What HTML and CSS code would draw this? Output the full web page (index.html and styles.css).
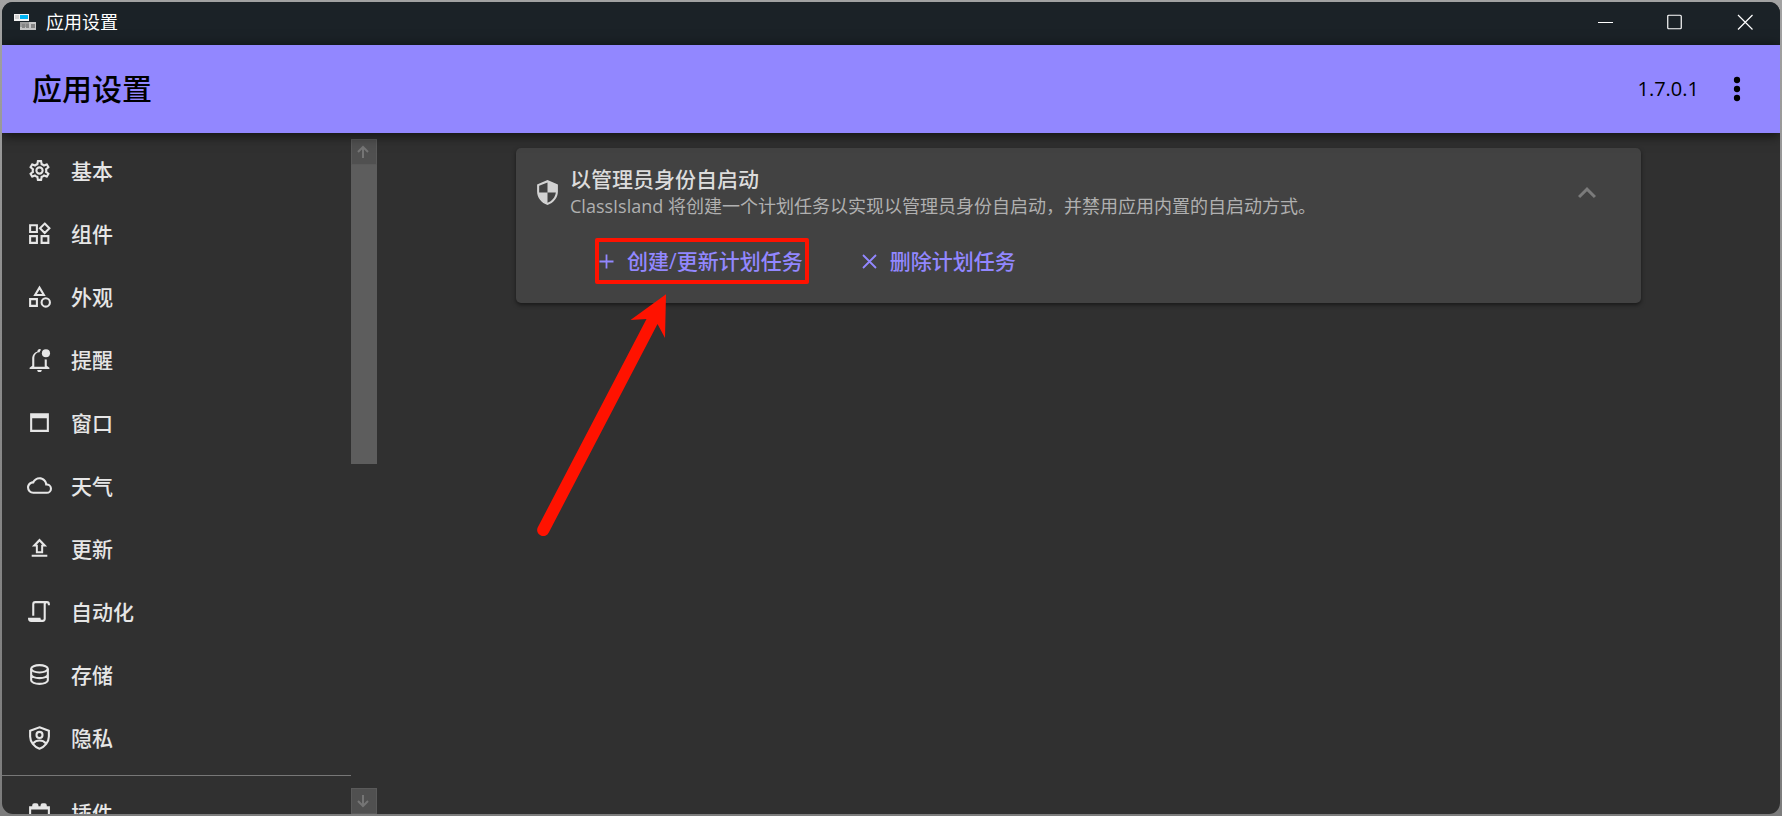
FILE: index.html
```html
<!DOCTYPE html>
<html lang="zh-CN">
<head>
<meta charset="utf-8">
<title>应用设置</title>
<link rel="stylesheet" href="styles.css">
</head>
<body>
<div class="window">
  <div class="titlebar">
    <svg class="app-icon" viewBox="0 0 22 16" aria-hidden="true">
      <rect width="15" height="7" fill="#f3f3f3"/><rect x="1" y="1" width="4" height="4" fill="#d0d0d0"/><rect x="6" y="1" width="8" height="4" fill="#00b4f5"/>
      <rect x="6" y="8" width="16" height="8" fill="#9b9b9b"/><path d="M15 8h7v8h-7z" fill="#c8c8c8"/><path d="M6 13h16v3H6z" fill="#c4c4c4"/><path d="M8 10h3v4H8zM12 10h3v4h-3zM17 10h4v4h-4z" fill="#858585"/>
    </svg>
    <span class="window-name">应用设置</span>
    <div class="window-controls">
      <button aria-label="最小化"><svg viewBox="0 0 16 16"><path d="M1 8.500H16"/></svg></button>
      <button aria-label="最大化"><svg viewBox="0 0 16 16"><rect x=".75" y="1.250" width="13.500" height="13.500" rx="1"/></svg></button>
      <button aria-label="关闭"><svg viewBox="0 0 16 16"><path d="M1 1 15.500 15.500M15.500 1 1 15.500"/></svg></button>
    </div>
  </div>
  <header class="appbar">
    <h1>应用设置</h1>
    <span class="version">1.7.0.1</span>
    <button class="more" aria-label="更多"><svg viewBox="0 0 24 24"><circle cx="12" cy="6" r="2.100"/><circle cx="12" cy="12" r="2.100"/><circle cx="12" cy="18" r="2.100"/></svg></button>
  </header>
  <div class="content">
    <nav class="sidebar">
      <div class="nav-list">
        <a href="#basic"><svg class="icon" viewBox="0 0 24 24"><path d="M12,8A4,4 0 0,1 16,12A4,4 0 0,1 12,16A4,4 0 0,1 8,12A4,4 0 0,1 12,8M12,10A2,2 0 0,0 10,12A2,2 0 0,0 12,14A2,2 0 0,0 14,12A2,2 0 0,0 12,10M10,22C9.75,22 9.54,21.82 9.5,21.58L9.13,18.93C8.5,18.68 7.96,18.34 7.44,17.94L4.95,18.95C4.73,19.03 4.46,18.95 4.34,18.73L2.34,15.27C2.21,15.05 2.27,14.78 2.46,14.63L4.57,12.97L4.5,12L4.57,11L2.46,9.37C2.27,9.22 2.21,8.95 2.34,8.73L4.34,5.27C4.46,5.05 4.73,4.96 4.95,5.05L7.44,6.05C7.96,5.66 8.5,5.32 9.13,5.07L9.5,2.42C9.54,2.18 9.75,2 10,2H14C14.25,2 14.46,2.18 14.5,2.42L14.87,5.07C15.5,5.32 16.04,5.66 16.56,6.05L19.05,5.05C19.27,4.96 19.54,5.05 19.66,5.27L21.66,8.73C21.79,8.95 21.73,9.22 21.54,9.37L19.43,11L19.5,12L19.43,13L21.54,14.63C21.73,14.78 21.79,15.05 21.66,15.27L19.66,18.73C19.54,18.95 19.27,19.04 19.05,18.95L16.56,17.95C16.04,18.34 15.5,18.68 14.87,18.93L14.5,21.58C14.46,21.82 14.25,22 14,22H10M11.25,4L10.88,6.61C9.68,6.86 8.62,7.5 7.85,8.39L5.44,7.35L4.69,8.65L6.8,10.2C6.4,11.37 6.4,12.64 6.8,13.8L4.68,15.36L5.43,16.66L7.86,15.62C8.63,16.5 9.68,17.14 10.87,17.38L11.24,20H12.76L13.13,17.39C14.32,17.14 15.37,16.5 16.14,15.62L18.57,16.66L19.32,15.36L17.2,13.81C17.6,12.64 17.6,11.37 17.2,10.2L19.31,8.65L18.56,7.35L16.15,8.39C15.38,7.5 14.32,6.86 13.12,6.62L12.75,4H11.25Z"/></svg>基本</a>
        <a href="#components"><svg class="icon line" viewBox="0 0 24 24"><path d="M3 4h6.500v6.500H3zM3 14.500h6.500V21H3zM14 14.500h6.500V21H14zM17 2.500 21.500 7 17 11.500 12.500 7z"/></svg>组件</a>
        <a href="#appearance"><svg class="icon line" viewBox="0 0 24 24"><path d="M12 3.500 16.200 10.500H7.800zM3 14.500h6.500V21H3z"/><circle cx="18" cy="17.700" r="4"/></svg>外观</a>
        <a href="#notify"><svg class="icon" viewBox="0 0 24 24"><path d="M2.500 21v-1L5 18v-7c0-3.100 2-5.800 5-6.700V4a2 2 0 0 1 3.500-1.300c-.8.700-1.200 1.600-1.400 2.300A5 5 0 0 0 7 10v9h10v-7.300c.6.200 1.300.3 2 .3v6l2.500 2v1zm7.300 1h4.400a2.200 2.200 0 0 1-4.400 0z"/><circle cx="18.200" cy="6" r="3.900"/></svg>提醒</a>
        <a href="#window"><svg class="icon" viewBox="0 0 24 24"><path d="M3 3h18v18H3zm2 5v11h14V8z" fill-rule="evenodd"/></svg>窗口</a>
        <a href="#weather"><svg class="icon" viewBox="0 0 24 24"><path d="M19,18H6A4,4 0 0,1 2,14A4,4 0 0,1 6,10H6.710C7.370,7.690 9.500,6 12,6A5.500,5.500 0 0,1 17.500,11.500V12H19A3,3 0 0,1 22,15A3,3 0 0,1 19,18M19.350,10.030C18.670,6.590 15.640,4 12,4C9.110,4 6.600,5.640 5.350,8.030C2.340,8.360 0,10.900 0,14A6,6 0 0,0 6,20H19A5,5 0 0,0 24,15C24,12.360 21.950,10.220 19.350,10.030Z"/></svg>天气</a>
        <a href="#update"><svg class="icon" viewBox="0 0 24 24"><path d="M4.500 18h15v2h-15zM12 2.500 19.300 10H15.500v6.500h-7V10H4.700zm0 2.900L9.200 8.300h1.200v6.300h3.200V8.300h1.200z" fill-rule="evenodd"/></svg>更新</a>
        <a href="#automation"><svg class="icon" viewBox="0 0 24 24"><path d="M15,20A1,1 0 0,0 16,19V4H8A1,1 0 0,0 7,5V16H5V5A3,3 0 0,1 8,2H19A3,3 0 0,1 22,5V6H20V5A1,1 0 0,0 19,4A1,1 0 0,0 18,5V19A3,3 0 0,1 15,22H4A3,3 0 0,1 1,19V18H13V19A1,1 0 0,0 14,20Z"/></svg>自动化</a>
        <a href="#storage"><svg class="icon line" viewBox="0 0 24 24"><ellipse cx="12" cy="6.500" rx="8" ry="3.500"/><path d="M4 6.500v11C4 19.500 7.600 21 12 21s8-1.500 8-3.500v-11M4 12c0 2 3.600 3.500 8 3.500s8-1.500 8-3.500"/></svg>存储</a>
        <a href="#privacy"><svg class="icon line" viewBox="0 0 24 24"><path d="M12 2.200 21 5.500V11c0 5-3.800 10-9 11.700C6.800 21 3 16 3 11V5.500zM6 17.500c1.500-1.800 3.600-2.700 6-2.700s4.500.9 6 2.700"/><circle cx="12" cy="9.500" r="2.900"/></svg>隐私</a>
        <hr>
        <a href="#plugins"><svg class="icon" viewBox="0 0 24 24"><path d="M19 6V5a2 2 0 0 0-2-2h-2a2 2 0 0 0-2 2v1h-2V5a2 2 0 0 0-2-2H7a2 2 0 0 0-2 2v1H2v14h20V6zm1 12H4V9h16z" fill-rule="evenodd"/></svg>插件</a>
      </div>
      <div class="scrollbar">
        <button aria-label="向上滚动"><svg viewBox="0 0 14 14"><path d="M6 13V2M1 7l5-5 5 5"/></svg></button>
        <div class="track"><div class="thumb"></div></div>
        <button aria-label="向下滚动"><svg viewBox="0 0 14 14"><path d="M6 1v11M1 7l5 5 5-5"/></svg></button>
      </div>
    </nav>
    <main class="page">
      <section class="card">
        <div class="card-head">
          <svg class="icon" viewBox="0 0 24 24"><path d="M12 0 2 4.200V11c0 6 4.200 11 10 13 5.800-2 10-7 10-13V4.200zM12 2.500V12h8c-.6 4.500-3.600 8.400-8 9.800V12H4V5.500z" fill-rule="evenodd"/></svg>
          <div class="card-text">
            <h2>以管理员身份自启动</h2>
            <p>ClassIsland 将创建一个计划任务以实现以管理员身份自启动，并禁用应用内置的自启动方式。</p>
          </div>
          <button class="collapse" aria-label="收起"><svg viewBox="0 0 24 24"><path d="M7.410,15.410 12,10.830 16.590,15.410 18,14 12,8 6,14Z"/></svg></button>
        </div>
        <div class="actions">
          <div class="marked">
            <button class="action"><svg class="glyph" viewBox="0 0 25 25"><path d="M12.500 5.500v14M5.500 12.500h14"/></svg>创建/更新计划任务</button>
            <div class="highlight"></div>
            <svg class="arrow" viewBox="0 0 130 246" aria-hidden="true"><path d="M129 1.300 93.500 27l16 -1L0.700 234.500A6 6 0 0 0 11.800 239.500L120.500 31l7.500 14z"/></svg>
          </div>
          <button class="action"><svg class="glyph" viewBox="0 0 25 25"><path d="m6 6 13 13M19 6 6 19"/></svg>删除计划任务</button>
        </div>
      </section>
    </main>
  </div>
</div>
</body>
</html>
```

FILE: styles.css
```css
* {
  box-sizing: border-box;
}

body {
  margin: 0;
  height: 100vh;
  padding: 2px;
  background: linear-gradient(#a2a2a2, #8c8c8c 40%, #7c7c7c);
  font-family: "Open Sans", "Noto Sans CJK SC", sans-serif;
  color: #e6e6e6;
  overflow: hidden;
}

h1, h2, p {
  margin: 0;
}

button {
  border: 0;
  padding: 0;
  background: none;
  color: inherit;
  font: inherit;
}

.window {
  display: flex;
  flex-direction: column;
  height: 100%;
  overflow: hidden;
  border-radius: 11px;
  background: #303030;
}

.titlebar {
  display: flex;
  align-items: center;
  flex: none;
  height: 43px;
  padding: 0 0 3px 12px;
  background: #1b2227;
  color: #fff;
}

.app-icon {
  width: 22px;
  height: 16px;
}

.window-name {
  margin-left: 10px;
  font-size: 18px;
  font-weight: 400;
  line-height: 24px;
}

.window-controls {
  display: flex;
  height: 100%;
  margin-left: auto;
}

.window-controls button {
  display: grid;
  place-items: center;
  width: 70px;
}

.window-controls svg {
  width: 16px;
  height: 16px;
  fill: none;
  stroke: #fff;
  stroke-width: 1.2;
}

.appbar {
  display: flex;
  align-items: center;
  flex: none;
  height: 88px;
  padding: 0 25px 0 30px;
  position: relative;
  z-index: 1;
  background: #9287ff;
  box-shadow: 0 2px 12px rgba(0, 0, 0, 0.7);
  color: #000;
}

.appbar h1 {
  font-size: 30px;
  font-weight: 500;
  line-height: 44px;
}

.version {
  margin-left: auto;
  margin-right: 20px;
  font-size: 20px;
  line-height: 28px;
}

.more,
.more svg {
  display: block;
  width: 36px;
  height: 36px;
}

.content {
  display: flex;
  flex: 1;
  min-height: 0;
}

.sidebar {
  display: flex;
  flex: none;
  width: 375px;
  padding-top: 6px;
}

.nav-list {
  flex: 1;
  overflow: hidden;
}

.nav-list a {
  display: flex;
  align-items: center;
  gap: 19px;
  height: 63px;
  padding-left: 25px;
  color: inherit;
  font-size: 21px;
  font-weight: 500;
  line-height: 28px;
  text-decoration: none;
}

.nav-list hr {
  height: 1px;
  margin: 6px 0 5px;
  border: 0;
  background: #777;
}

.icon {
  display: block;
  flex: none;
  width: 25px;
  height: 25px;
  fill: currentColor;
}

.line {
  fill: none;
  stroke: currentColor;
  stroke-width: 2;
}

.scrollbar {
  display: flex;
  flex-direction: column;
  width: 26px;
}

.scrollbar button {
  display: grid;
  place-items: center;
  height: 26px;
  border: 1px solid #5a5a5a;
  background: #505050;
}

.scrollbar svg {
  width: 14px;
  height: 14px;
  fill: none;
  stroke: #757575;
  stroke-width: 2;
}

.track {
  flex: 1;
}

.thumb {
  height: 48%;
  background: #5d5d5d;
}

.page {
  flex: 1;
  padding: 15px 20px;
}

.card {
  max-width: 1125px;
  margin: 0 auto;
  padding: 17px 0 20px;
  border-radius: 5px;
  background: #424242;
  box-shadow: 0 2px 4px rgba(0, 0, 0, 0.5);
}

.card-head {
  display: flex;
  align-items: center;
  gap: 10px;
  padding: 0 36px 0 19px;
}

.card-head .icon {
  color: #d2d2d2;
}

.card-text {
  flex: 1;
}

.card h2 {
  color: #dcdcdc;
  font-size: 21px;
  font-weight: 500;
  line-height: 28px;
}

.card p {
  color: #b0b0b0;
  font-size: 18px;
  line-height: 27px;
}

.collapse svg {
  display: block;
  width: 36px;
  height: 36px;
  fill: #7b7b7b;
}

.actions {
  display: flex;
  gap: 14px;
  margin-top: 19px;
  padding-left: 58px;
}

.action {
  display: flex;
  align-items: center;
  gap: 8px;
  height: 44px;
  padding: 0 20px;
  color: #9287ff;
  font-size: 21px;
  font-weight: 500;
  line-height: 28px;
}

.glyph {
  width: 25px;
  height: 25px;
  fill: none;
  stroke: currentColor;
  stroke-width: 1.8;
}

.marked {
  position: relative;
}

.highlight {
  position: absolute;
  inset: -1px 14px -1px 21px;
  border: 4px solid #ff1200;
  border-radius: 2px;
  pointer-events: none;
}

.arrow {
  position: absolute;
  top: 54px;
  left: -37px;
  width: 130px;
  height: 246px;
  fill: #ff1200;
  pointer-events: none;
}
```
